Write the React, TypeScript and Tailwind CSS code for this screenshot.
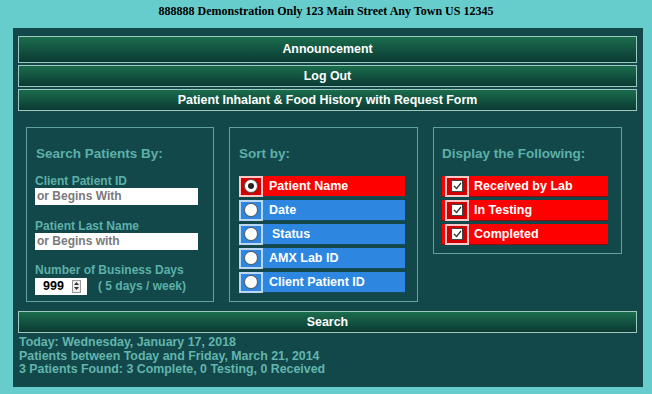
import React from 'react';

const sortOptions = ['Patient Name', 'Date', 'Status', 'AMX Lab ID', 'Client Patient ID'];
const displayOptions = ['Received by Lab', 'In Testing', 'Completed'];

const NavButton = ({ label, h }: { label: string; h: string }) => (
  <div
    className={`${h} w-[619px] flex items-center justify-center border border-[#9ec7bd] bg-gradient-to-b from-[#1b6d4d] to-[#0b3a33] text-white font-bold text-[12.4px]`}
  >
    {label}
  </div>
);

const Radio = ({ checked }: { checked: boolean }) => (
  <div className="w-[14px] h-[14px] rounded-full bg-white border border-[#555] flex items-center justify-center">
    {checked && <div className="w-[6px] h-[6px] rounded-full bg-[#222]" />}
  </div>
);

const Check = () => (
  <div className="w-[12px] h-[12px] bg-white border border-[#444] flex items-center justify-center">
    <svg width="9" height="8" viewBox="0 0 9 8">
      <path d="M1 4 L3.5 6.5 L8 1" fill="none" stroke="#333" strokeWidth="1.2" />
    </svg>
  </div>
);

export default function App() {
  return (
    <div
      className="w-[652px] h-[394px] bg-[#66cccc] overflow-hidden"
      style={{ fontFamily: '"Liberation Sans", Arial, sans-serif' }}
    >
      <div
        className="h-[28px] pt-[4px] text-center text-[12px] leading-[14px] font-bold text-black"
        style={{ fontFamily: '"Liberation Serif", "Times New Roman", serif' }}
      >
        888888 Demonstration Only 123 Main Street Any Town US 12345
      </div>

      <div className="ml-[13px] w-[630px] h-[359px] bg-[#13484a] pl-[5px] pt-[8px]">
        <div className="flex flex-col gap-[2px]">
          <NavButton label="Announcement" h="h-[27px]" />
          <NavButton label="Log Out" h="h-[22px]" />
          <NavButton label="Patient Inhalant & Food History with Request Form" h="h-[22px]" />
        </div>

        <div className="flex items-start gap-[15px] ml-[8px] mt-[16px]">
          {/* search */}
          <div className="w-[188px] h-[175px] border border-[#62a29d] pl-[8px] pt-[18px] font-bold text-[#5cb0a8]">
            <div className="text-[13.5px] leading-[16px] pl-[1px]">Search Patients By:</div>
            <div className="mt-[12px] text-[12px] leading-[14px]">Client Patient ID</div>
            <div className="w-[163px] h-[17px] bg-white px-[2px] text-[12px] leading-[17px] text-[#7a7a7a]">or Begins With</div>
            <div className="mt-[14px] text-[12px] leading-[14px]">Patient Last Name</div>
            <div className="w-[163px] h-[17px] bg-white px-[2px] text-[12px] leading-[17px] text-[#7a7a7a]">or Begins with</div>
            <div className="mt-[13px] text-[12px] leading-[14px]">Number of Business Days</div>
            <div className="flex items-center">
              <div className="w-[52px] h-[17px] bg-white flex items-center pl-[8px] text-[12.5px] text-black">
                <span className="w-[29px]">999</span>
                <div className="w-[9px] h-[13px] border border-[#999] bg-[#eee] flex flex-col items-center justify-around">
                  <svg width="5" height="3" viewBox="0 0 5 3"><path d="M0 3 L2.5 0 L5 3Z" fill="#333" /></svg>
                  <svg width="5" height="3" viewBox="0 0 5 3"><path d="M0 0 L2.5 3 L5 0Z" fill="#333" /></svg>
                </div>
              </div>
              <span className="ml-[11px] text-[12px]">( 5 days / week)</span>
            </div>
          </div>

          {/* sort */}
          <div className="w-[189px] h-[175px] border border-[#62a29d] pl-[9px] pt-[18px] font-bold">
            <div className="text-[13.5px] leading-[16px] text-[#5cb0a8]">Sort by:</div>
            <div className="mt-[14px] flex flex-col gap-[3px]">
              {sortOptions.map((o, i) => (
                <div
                  key={o}
                  className={`w-[166px] h-[21px] flex items-center border-b border-[#1a4a60] ${i === 0 ? 'bg-[#ff0000]' : 'bg-[#2d86df]'}`}
                >
                  <div
                    className={`w-[24px] h-[21px] flex items-center justify-center border-2 ${i === 0 ? 'border-[#ffc8c8] bg-[#d00000]' : 'border-[#b8d8f4] bg-[#2d86df]'}`}
                  >
                    <Radio checked={i === 0} />
                  </div>
                  <span className={`${o === 'Status' ? 'ml-[9px]' : 'ml-[6px]'} text-white text-[12.5px]`}>{o}</span>
                </div>
              ))}
            </div>
          </div>

          {/* display */}
          <div className="w-[189px] h-[127px] border border-[#62a29d] pl-[8px] pt-[18px] font-bold">
            <div className="text-[13.5px] leading-[16px] text-[#5cb0a8]">Display the Following:</div>
            <div className="mt-[14px] flex flex-col gap-[3px]">
              {displayOptions.map((o) => (
                <div key={o} className="w-[166px] h-[21px] flex items-center bg-[#ff0000] border-b border-[#8a1010]">
                  <div className="ml-[3px] w-[24px] h-[21px] flex items-center justify-center border-2 border-[#ffc8c8] bg-[#d00000]">
                    <Check />
                  </div>
                  <span className="ml-[5px] text-white text-[12.5px]">{o}</span>
                </div>
              ))}
            </div>
          </div>
        </div>

        <div className="mt-[9px]">
          <NavButton label="Search" h="h-[22px]" />
        </div>

        <div className="mt-[3px] pl-[1px] text-[12.4px] leading-[13.5px] font-bold text-[#62b5ad]">
          <div>Today: Wednesday, January 17, 2018</div>
          <div>Patients between Today and Friday, March 21, 2014</div>
          <div>3 Patients Found: 3 Complete, 0 Testing, 0 Received</div>
        </div>
      </div>
    </div>
  );
}
